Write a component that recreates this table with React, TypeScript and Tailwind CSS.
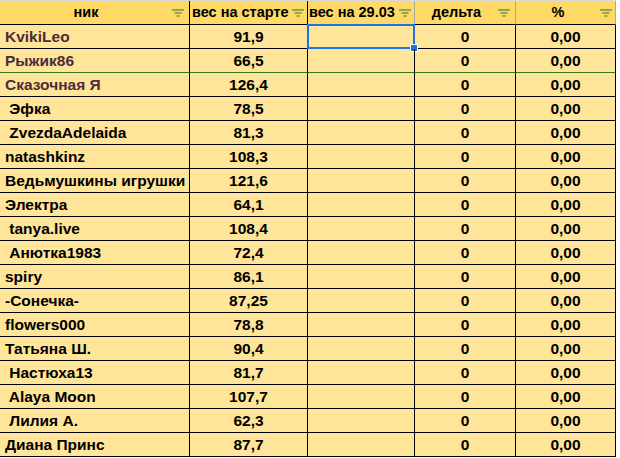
import React from "react";

type Row = { nick: string; start: string; accent?: boolean };

const rows: Row[] = [
  { nick: "KvikiLeo", start: "91,9", accent: true },
  { nick: "Рыжик86", start: "66,5", accent: true },
  { nick: "Сказочная Я", start: "126,4", accent: true },
  { nick: " Эфка", start: "78,5" },
  { nick: " ZvezdaAdelaida", start: "81,3" },
  { nick: "natashkinz", start: "108,3" },
  { nick: "Ведьмушкины игрушки", start: "121,6" },
  { nick: "Электра", start: "64,1" },
  { nick: " tanya.live", start: "108,4" },
  { nick: " Анютка1983", start: "72,4" },
  { nick: "spiry", start: "86,1" },
  { nick: "-Сонечка-", start: "87,25" },
  { nick: "flowers000", start: "78,8" },
  { nick: "Татьяна Ш.", start: "90,4" },
  { nick: " Настюха13", start: "81,7" },
  { nick: " Alaya Moon", start: "107,7" },
  { nick: " Лилия А.", start: "62,3" },
  { nick: "Диана Принс", start: "87,7" },
];

const FilterIcon = () => (
  <svg width="12" height="8" viewBox="0 0 12 8" className="shrink-0">
    <path d="M0 1h12M2.5 4h7M4.5 7h3" stroke="#1e7b34" strokeWidth="1.2" />
  </svg>
);

const HeaderCell: React.FC<{
  label: string;
  className: string;
  align?: "center" | "left";
}> = ({ label, className, align = "center" }) => (
  <div className={`flex h-full items-center border-b border-black ${className}`}>
    <span
      className={
        align === "center" ? "flex-1 text-center" : "flex-1 text-left whitespace-nowrap"
      }
    >
      {label}
    </span>
    <FilterIcon />
  </div>
);

export default function App() {
  return (
    <div
      className="w-[620px] h-[458px] overflow-hidden bg-white font-bold text-black"
      style={{ fontFamily: '"Liberation Sans", Arial, sans-serif' }}
    >
      <div className="w-[616px] border-t border-[#d9d9d9]">
        <div className="grid h-[24px] grid-cols-[190px_118px_107px_101px_100px] bg-[#ffd966] text-[14.5px]">
          <HeaderCell label="ник" className="border-r border-r-black pr-[5px]" />
          <HeaderCell label="вес на старте" align="left" className="border-r border-r-black pl-[2px] pr-[3px]" />
          <HeaderCell label="вес на 29.03" align="left" className="border-r border-r-[#a8a8a8] pl-[1px] pr-[3px]" />
          <HeaderCell label="дельта" className="border-r border-r-[#a8a8a8] pr-[5px]" />
          <HeaderCell label="%" className="border-r border-r-[#a8a8a8] pr-[3px]" />
        </div>
        {rows.map((r, i) => {
          const bottom = i === 1 ? "border-b-[#38761d]" : "border-b-black";
          const cell = `h-[24px] flex items-center border-b border-r border-r-black ${bottom}`;
          return (
            <div
              key={i}
              className="grid grid-cols-[190px_118px_107px_101px_100px] bg-[#ffe599] text-[15.5px]"
            >
              <div
                className={`${cell} pl-[5px] whitespace-pre overflow-hidden ${
                  r.accent ? "text-[#4a2c3a]" : ""
                }`}
              >
                {r.nick}
              </div>
              <div className={`${cell} justify-center`}>{r.start}</div>
              <div className={`${cell} relative`}>
                {i === 0 && (
                  <div className="absolute -left-[1px] -top-[1px] h-[25px] w-[108px] border-2 border-[#1a73e8]">
                    <div className="absolute -right-[4px] -bottom-[4px] h-[6px] w-[6px] bg-[#1a73e8] outline outline-1 outline-white" />
                  </div>
                )}
              </div>
              <div className={`${cell} justify-center`}>0</div>
              <div className={`${cell} justify-center`}>0,00</div>
            </div>
          );
        })}
      </div>
    </div>
  );
}
